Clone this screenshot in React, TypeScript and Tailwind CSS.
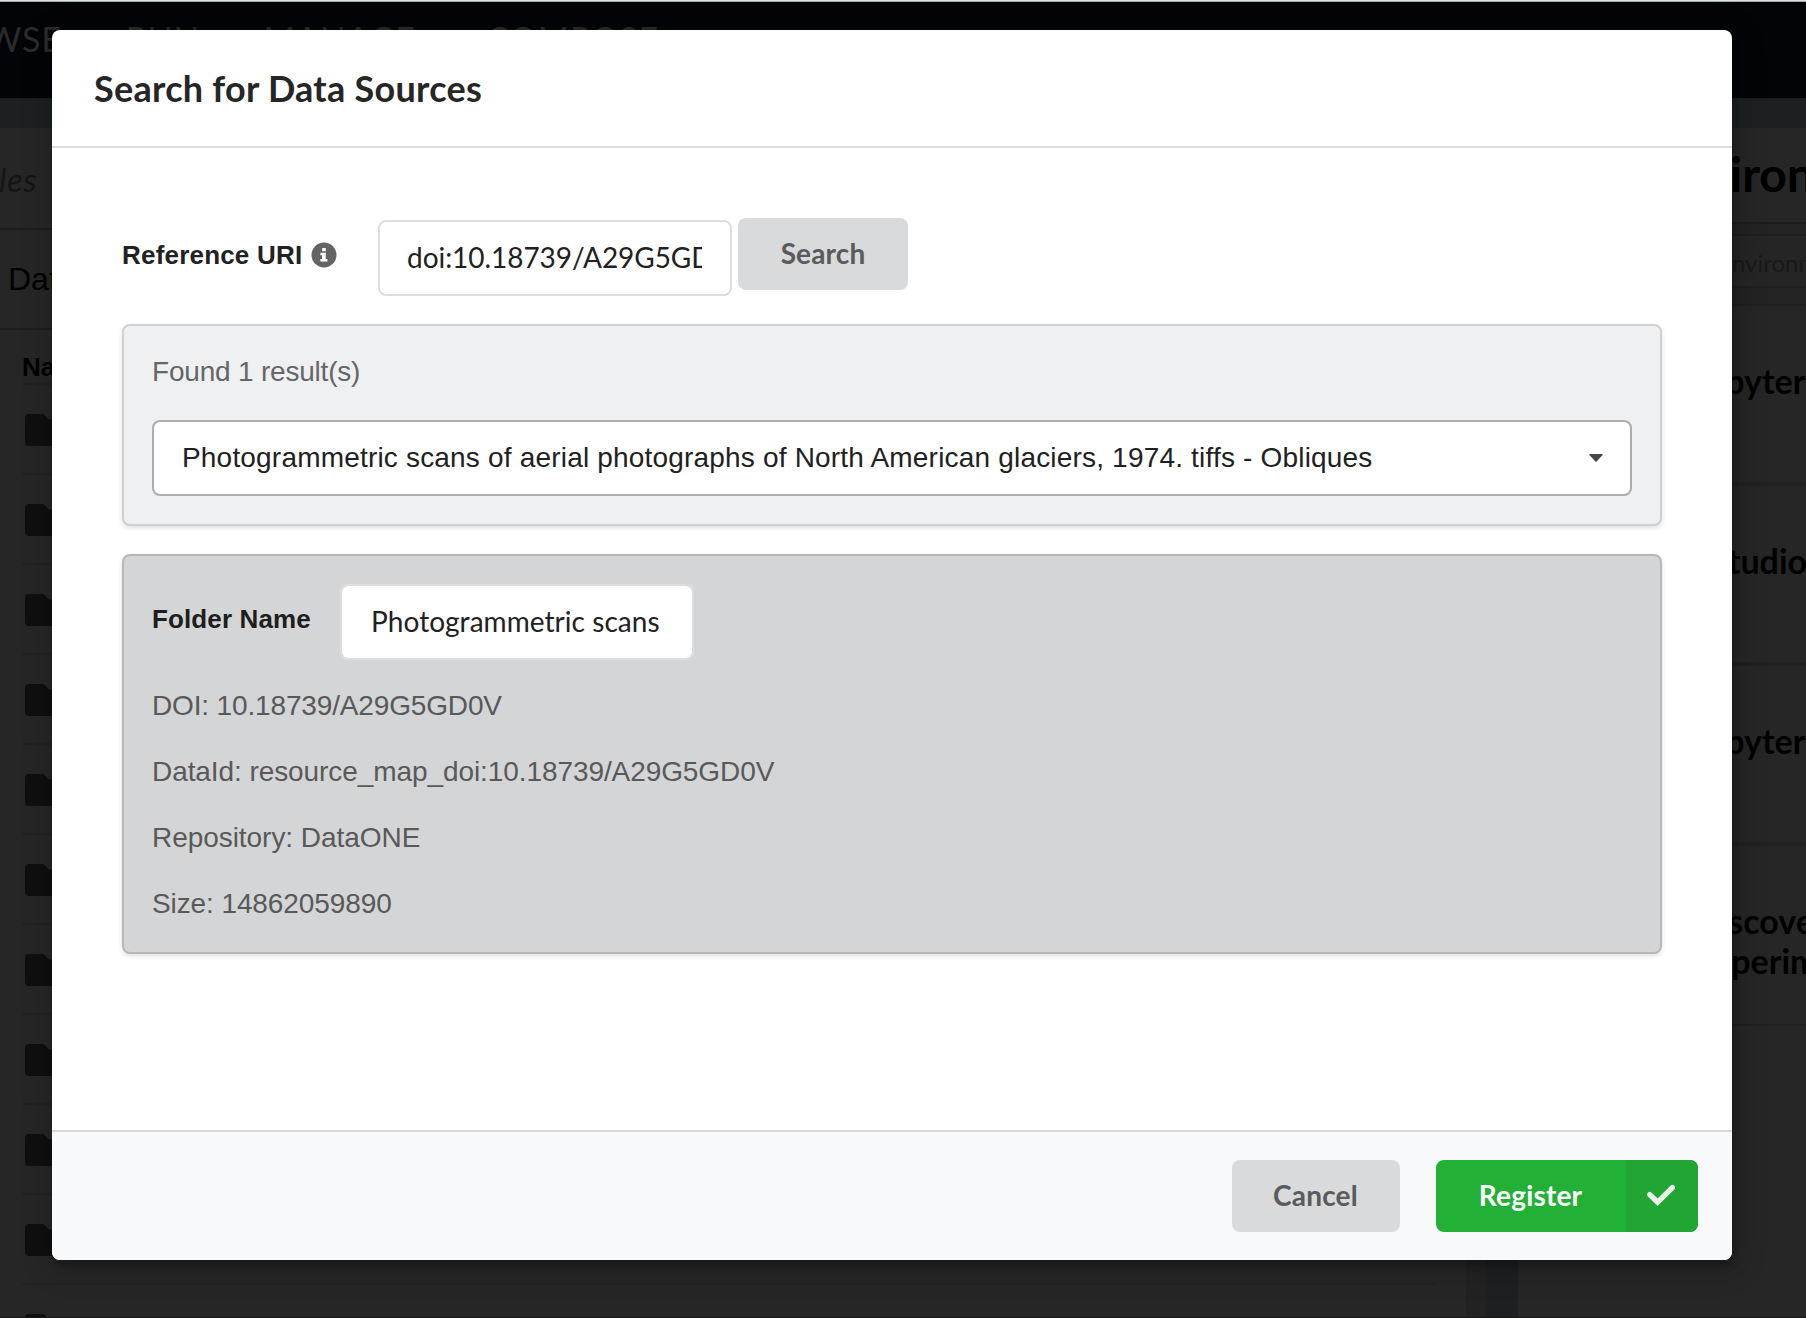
const NAV = [
  { label: 'BROWSE', className: 'w-[211.5px]' },
  { label: 'RUN', className: 'w-[138px]' },
  { label: 'MANAGE', className: 'w-[223px]' },
  { label: 'COMPOSE', className: 'w-[240px]' },
];

const ROWS = Array.from({ length: 11 }, (_, i) => i);

const ENVIRONMENTS = [
  { lines: ['Jupyter'], className: 'pl-[174px] border-b-4' },
  { lines: ['RStudio'], className: 'pl-[170px] border-b-4' },
  { lines: ['Jupyter'], className: 'pl-[174px] border-b-4' },
  { lines: ['Discover', 'Experiment'], className: 'pl-[176px] border-b-2' },
];

const DETAILS = [
  { text: 'DOI: 10.18739/A29G5GD0V', className: 'tracking-[-0.15px]' },
  { text: 'DataId: resource_map_doi:10.18739/A29G5GD0V', className: 'tracking-[-0.08px]' },
  { text: 'Repository: DataONE', className: 'tracking-[-0.05px]' },
  { text: 'Size: 14862059890', className: 'tracking-[-0.1px]' },
];

const sans = "font-['Liberation_Sans',Arial,sans-serif]";

function FolderIcon() {
  return (
    <svg className="mt-px h-8 w-10 shrink-0" viewBox="0 0 40 32" fill="#0f0f0f">
      <path d="M4 0h13.500q1.200 0 2 .9l3.600 3.900q.7.700 1.700.7H36a4 4 0 0 1 4 4V28a4 4 0 0 1-4 4H4a4 4 0 0 1-4-4V4a4 4 0 0 1 4-4z" />
    </svg>
  );
}

function InfoIcon() {
  return (
    <svg className="h-[26px] w-[26px]" viewBox="0 0 26 26">
      <circle cx="13" cy="13" r="12.500" fill="#646464" />
      <path fill="#fff" d="M11.200 6h3.600v3.300h-3.600zM9.400 10.700h5.400v6.200h1.600v2.600H9.400v-2.600H11v-3.600H9.400z" />
    </svg>
  );
}

function Backdrop() {
  return (
    <div className="flex h-[1318px] w-[1806px] flex-col overflow-hidden border-b border-[#161616] bg-[#262626]">
      <div className="h-[2px] shrink-0 border-b border-[#a3abab] bg-[#dde3e3]" />
      <nav className="flex h-[96px] shrink-0 bg-[#030407] text-[34px] leading-[74px] tracking-[0.8px] text-[#2b2b2b]">
        <div className="-ml-[86px] flex">
          {NAV.map((n) => (
            <span key={n.label} className={n.className}>{n.label}</span>
          ))}
        </div>
      </nav>
      <div className="h-[30px] shrink-0 bg-[#1c2021]" />
      <div className="flex min-h-0 flex-1">
        <section className="w-[1466px] shrink-0">
          <div className="h-[102px] overflow-hidden border-b-2 border-[#1d1d1d] text-[33px] italic leading-[103px] tracking-[0.6px] text-[#151515]">
            <span className="-ml-[27px]">Files</span>
          </div>
          <div className={`h-[100px] border-b-2 border-[#1d1d1d] pl-[8px] text-[32px] leading-[98px] text-black ${sans}`}>Data</div>
          <div className="ml-[22px] w-[1412px]">
            <div className={`h-[55px] border-b-2 border-[#222] text-[26px] font-bold leading-[74px] text-black ${sans}`}>Name</div>
            {ROWS.map((i) => (
              <div key={i} className="flex h-[90px] items-center border-b-2 border-[#222] pl-[3px]">
                <FolderIcon />
              </div>
            ))}
          </div>
        </section>
        <div className="w-[20px] shrink-0 bg-[#222]" />
        <div className="w-[32px] shrink-0 bg-[#1c2021]" />
        <section className="w-[288px] shrink-0 overflow-hidden whitespace-nowrap">
          <div className="h-[96px] border-b-2 border-[#1c1c1c] pl-[133px] text-[48px] font-bold leading-[92px] text-black">Environments</div>
          <div className="h-[82px] border-b-2 border-[#1e1e1e] bg-[#232323] py-[10px]">
            <div className="h-[54px] border-y-2 border-[#1f1f1f] bg-[#252525] pl-[149px] text-[24px] leading-[54px] text-[#191919]">Find environment</div>
          </div>
          {ENVIRONMENTS.map((e, i) => (
            <div key={i} className={`h-[180px] border-[#202020] pt-[55px] text-[34px] font-bold leading-10 text-black ${e.className}`}>
              {e.lines.map((l) => (
                <div key={l}>{l}</div>
              ))}
            </div>
          ))}
        </section>
      </div>
    </div>
  );
}

export default function App() {
  return (
    <div className="relative h-[1318px] w-[1806px] overflow-hidden font-['Lato',sans-serif]">
      <Backdrop />
      <div className="absolute left-[52px] top-[30px] flex h-[1230px] w-[1680px] flex-col overflow-hidden rounded-[8px] bg-white shadow-[2px_6px_6px_0_rgba(0,0,0,0.2),2px_6px_30px_4px_rgba(0,0,0,0.2)]">
        <header className="h-[118px] shrink-0 border-b-2 border-[#dcddde] pl-[42px] text-[36px] font-bold leading-[116px] tracking-[0.26px] text-[#262626]">
          Search for Data Sources
        </header>

        <main className="flex-1 px-[70px] pt-[70px]">
          <div className="flex h-[106px] items-start">
            <div className={`flex w-[256px] items-center gap-[9px] pt-[23px] text-[26px] font-bold leading-[26px] tracking-[0.2px] text-[#222] ${sans}`}>
              <span className="pt-px">Reference URI</span>
              <InfoIcon />
            </div>
            <div className="mt-[2px] h-[76px] w-[354px] rounded-[8px] border-2 border-[#dededf] pl-[27px] pr-7 text-[28px] leading-[70px] text-[#212121]">
              <div className="overflow-hidden whitespace-nowrap tracking-[-0.05px]">doi:10.18739/A29G5GD0V</div>
            </div>
            <button className="ml-[6px] h-[72px] w-[170px] rounded-[8px] bg-[#d9dadc] pb-[2px] text-[28px] font-bold tracking-[0.15px] text-[#5b5b5c]">Search</button>
          </div>

          <div className={`h-[202px] rounded-[8px] border-2 border-[#cfd0d2] bg-[#eff0f2] px-7 pt-7 text-[28px] shadow-[0_2px_4px_0_rgba(34,36,38,0.15)] ${sans}`}>
            <div className="h-[66px] leading-[36px] tracking-[-0.2px] text-[#666]">Found 1 result(s)</div>
            <div className="flex h-[76px] items-center justify-between rounded-[8px] border-2 border-[#adadad] bg-white pl-7 pr-[27px] text-[#212121]">
              <span className="tracking-[0.187px]">Photogrammetric scans of aerial photographs of North American glaciers, 1974. tiffs - Obliques</span>
              <svg className="h-[8px] w-[14px]" viewBox="0 0 14 8" fill="#484848">
                <path d="M.8 0h12.400q.9.200.4.900L7.600 7.500q-.6.500-1.200 0L.4.9Q-.1.200.8 0z" />
              </svg>
            </div>
          </div>

          <div className="mt-7 h-[400px] rounded-[8px] border-2 border-[#b6b7b8] bg-[#d4d5d7] px-7 pt-7 shadow-[0_2px_4px_0_rgba(34,36,38,0.15)]">
            <div className="flex h-[104px] items-start">
              <div className={`w-[188px] pt-[22px] text-[26px] font-bold leading-[26px] tracking-[0.12px] text-[#1e1e1e] ${sans}`}>Folder Name</div>
              <div className="h-[76px] w-[354px] rounded-[8px] border-2 border-[#dededf] bg-white bg-clip-padding pl-[29px] text-[28px] leading-[70px] tracking-[0.05px] text-[#212121]">
                Photogrammetric scans
              </div>
            </div>
            <div className={`text-[28px] text-[#595959] ${sans}`}>
              {DETAILS.map((d) => (
                <div key={d.text} className={`h-[66px] leading-[36px] ${d.className}`}>{d.text}</div>
              ))}
            </div>
          </div>
        </main>

        <footer className="flex h-[130px] shrink-0 justify-end gap-9 border-t-2 border-[#d7d8d9] bg-[#f8f9fb] pr-[34px] pt-7 text-[28px] font-bold tracking-[0.2px]">
          <button className="h-[72px] w-[168px] rounded-[8px] bg-[#d9dadc] pb-[2px] pr-px text-[#5b5b5c]">Cancel</button>
          <button className="flex h-[72px] w-[262px] overflow-hidden rounded-[8px] bg-[#22b037] text-white">
            <span className="w-[190px] pr-px leading-[70px]">Register</span>
            <span className="flex h-full flex-1 items-center justify-center bg-[#21a634] pr-[2px]">
              <svg className="h-[26px] w-[28px]" viewBox="0 0 28 26" fill="none">
                <path d="M2.800 11.600 10.600 19.200 25.400 4.600" stroke="#e7f6e9" strokeWidth="5.400" strokeLinecap="round" />
              </svg>
            </span>
          </button>
        </footer>
      </div>
    </div>
  );
}
